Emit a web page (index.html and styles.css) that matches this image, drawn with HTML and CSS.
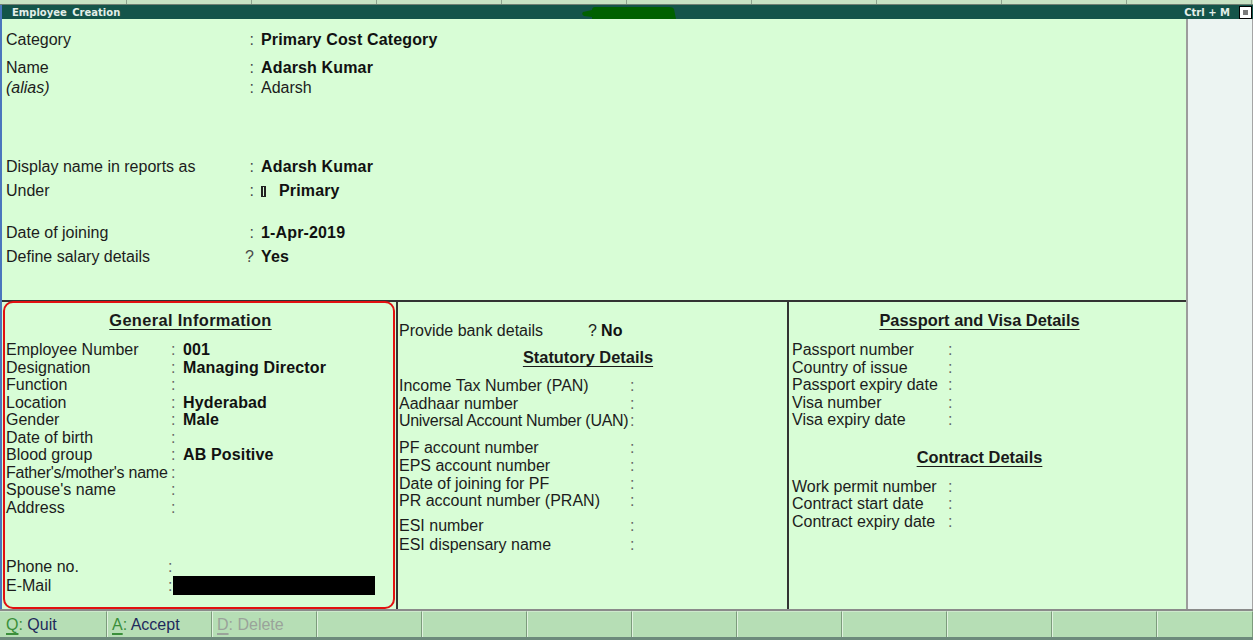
FILE: index.html
```html
<!DOCTYPE html>
<html lang="en">
<head>
<meta charset="utf-8">
<title>Employee Creation</title>
<link rel="stylesheet" href="styles.css">
</head>
<body>
<div class="tabs">
  <div class="tab"></div><div class="tab"></div><div class="tab"></div><div class="tab"></div><div class="tab"></div>
  <div class="tab"></div><div class="tab"></div><div class="tab"></div><div class="tab"></div><div class="tab"></div>
</div>
<div class="window">
  <div class="titlebar">
    <span class="title">Employee Creation</span>
    <svg class="blob" width="95" height="12" viewBox="0 0 95 12"><path d="M2 5 Q0 7 3 9 L11 10 L11 12 L95 12 L93 2 Q92 0 88 0 L14 0 Q11 0 11 3 Z" fill="#006100"/></svg>
    <span class="shortcut">Ctrl + M</span>
    <span class="winbtn"><span class="winbtn-dot"></span></span>
  </div>
  <div class="main">
    <div class="form">
      <div class="top">
        <div class="frow"><span class="lbl">Category</span><span class="mk">:</span><span class="val">Primary Cost Category</span></div>
        <div class="frow name"><span class="lbl">Name</span><span class="mk">:</span><span class="val">Adarsh Kumar</span></div>
        <div class="frow alias"><span class="lbl">(alias)</span><span class="mk">:</span><span class="val">Adarsh</span></div>
        <div class="frow display"><span class="lbl">Display name in reports as</span><span class="mk">:</span><span class="val">Adarsh Kumar</span></div>
        <div class="frow"><span class="lbl">Under</span><span class="mk">:</span><span class="val"><span class="grp-mark"></span>Primary</span></div>
        <div class="frow doj"><span class="lbl">Date of joining</span><span class="mk">:</span><span class="val">1-Apr-2019</span></div>
        <div class="frow"><span class="lbl">Define salary details</span><span class="mk">?</span><span class="val">Yes</span></div>
      </div>
      <div class="lower">
        <section class="panel general">
          <div class="heading">General Information</div>
          <div class="kvs">
            <div class="kv"><span>Employee Number</span><span class="c">:</span><span class="v">001</span></div>
            <div class="kv"><span>Designation</span><span class="c">:</span><span class="v">Managing Director</span></div>
            <div class="kv"><span>Function</span><span class="c">:</span><span class="v"></span></div>
            <div class="kv"><span>Location</span><span class="c">:</span><span class="v">Hyderabad</span></div>
            <div class="kv"><span>Gender</span><span class="c">:</span><span class="v">Male</span></div>
            <div class="kv"><span>Date of birth</span><span class="c">:</span><span class="v"></span></div>
            <div class="kv"><span>Blood group</span><span class="c">:</span><span class="v">AB Positive</span></div>
            <div class="kv"><span class="tight">Father's/mother's name</span><span class="c">:</span><span class="v"></span></div>
            <div class="kv"><span>Spouse's name</span><span class="c">:</span><span class="v"></span></div>
            <div class="kv"><span>Address</span><span class="c">:</span><span class="v"></span></div>
            <div class="kv phone"><span>Phone no.</span><span class="c left">:</span><span class="v"></span></div>
            <div class="kv email"><span>E-Mail</span><span class="c left">:</span><span class="v"><span class="redact"></span></span></div>
          </div>
        </section>
        <section class="panel statutory">
          <div class="kv bank"><span>Provide bank details</span><span class="q">?</span><span class="v">No</span></div>
          <div class="heading">Statutory Details</div>
          <div class="kvs">
            <div class="kv"><span>Income Tax Number (PAN)</span><span class="c">:</span><span class="v"></span></div>
            <div class="kv"><span>Aadhaar number</span><span class="c">:</span><span class="v"></span></div>
            <div class="kv"><span class="squeeze">Universal Account Number (UAN)</span><span class="c">:</span><span class="v"></span></div>
            <div class="kv grp"><span>PF account number</span><span class="c">:</span><span class="v"></span></div>
            <div class="kv"><span>EPS account number</span><span class="c">:</span><span class="v"></span></div>
            <div class="kv"><span>Date of joining for PF</span><span class="c">:</span><span class="v"></span></div>
            <div class="kv"><span>PR account number (PRAN)</span><span class="c">:</span><span class="v"></span></div>
            <div class="kv grp2"><span>ESI number</span><span class="c">:</span><span class="v"></span></div>
            <div class="kv esid"><span>ESI dispensary name</span><span class="c">:</span><span class="v"></span></div>
          </div>
        </section>
        <section class="panel passport">
          <div class="heading">Passport and Visa Details</div>
          <div class="kvs">
            <div class="kv"><span>Passport number</span><span class="c">:</span><span class="v"></span></div>
            <div class="kv"><span>Country of issue</span><span class="c">:</span><span class="v"></span></div>
            <div class="kv"><span>Passport expiry date</span><span class="c">:</span><span class="v"></span></div>
            <div class="kv"><span>Visa number</span><span class="c">:</span><span class="v"></span></div>
            <div class="kv"><span>Visa expiry date</span><span class="c">:</span><span class="v"></span></div>
          </div>
          <div class="heading contract">Contract Details</div>
          <div class="kvs">
            <div class="kv"><span>Work permit number</span><span class="c">:</span><span class="v"></span></div>
            <div class="kv"><span>Contract start date</span><span class="c">:</span><span class="v"></span></div>
            <div class="kv"><span>Contract expiry date</span><span class="c">:</span><span class="v"></span></div>
          </div>
        </section>
      </div>
    </div>
    <aside class="sidebar"></aside>
  </div>
</div>
<div class="keys">
  <div class="key first"><span class="hk"><u>Q</u>:</span> Quit</div>
  <div class="key"><span class="hk"><u>A</u>:</span> Accept</div>
  <div class="key off"><span class="hk"><u>D</u>:</span> Delete</div>
  <div class="key"></div><div class="key"></div><div class="key"></div><div class="key"></div>
  <div class="key"></div><div class="key"></div><div class="key"></div><div class="key"></div>
  <div class="key last"></div>
</div>
</body>
</html>
```

FILE: styles.css
```css
* { box-sizing: border-box; }
html, body { margin: 0; padding: 0; }
body {
  width: 1253px;
  height: 640px;
  overflow: hidden;
  font-family: "Liberation Sans", Arial, sans-serif;
  font-size: 16px;
  color: #1c1c1c;
  background: #d8fdd6;
}

/* top strip of tabs */
.tabs {
  display: flex;
  height: 5px;
  background: #c7e2c3;
  border-bottom: 1px solid #6f7f72;
}
.tab {
  width: 125px;
  flex: none;
  border-right: 1px solid #8ea38e;
}
.tab:first-child { width: 127px; }

/* window */
.window { border-left: 2px solid #4a76bd; }
.titlebar {
  position: relative;
  height: 14px;
  background: #14544a;
  display: flex;
  align-items: center;
  padding-left: 10px;
}
.title {
  flex: 1;
  color: #e3efe9;
  font: bold 10px "DejaVu Sans", sans-serif;
  word-spacing: 2px;
}
.blob {
  position: absolute;
  left: 579px;
  top: 2px;
}
.shortcut {
  color: #e3efe9;
  font: bold 10px "DejaVu Sans", sans-serif;
  margin-right: 9px;
}
.winbtn {
  width: 13px;
  height: 13px;
  background: #fff;
  border: 1px solid #000;
  display: flex;
  align-items: center;
  justify-content: center;
  margin-right: 1px;
}
.winbtn-dot { width: 5px; height: 5px; background: #7c7c7c; }

.main { display: flex; height: 590px; }
.form {
  width: 1184px;
  flex: none;
  display: flex;
  flex-direction: column;
  background: #d8fdd6;
}
.sidebar {
  flex: 1;
  background: #ecf4f2;
  border-left: 2px solid #9c9c9c;
  border-right: 1px solid #a5a5a5;
}

/* top section */
.top {
  height: 283px;
  flex: none;
  border-bottom: 2px solid #333;
  padding: 9px 0 0 4px;
}
.frow { display: flex; line-height: 24px; white-space: nowrap; }
.frow .lbl { width: 236px; flex: none; }
.frow .mk { width: 12px; flex: none; text-align: right; color: #4a4a4a; }
.frow .val { margin-left: 7px; font-weight: bold; color: #111; letter-spacing: 0.15px; }
.frow.name { margin-top: 4px; }
.frow.alias { line-height: 16px; }
.frow.alias .lbl { font-style: italic; }
.frow.alias .val { font-weight: normal; color: #1c1c1c; letter-spacing: 0; }
.frow.display { margin-top: 59px; }
.frow.doj { margin-top: 18px; }
.grp-mark {
  display: inline-block;
  width: 5px;
  height: 11px;
  border-left: 2px solid #222;
  border-right: 2px solid #222;
  border-top: 1px solid #222;
  border-bottom: 1px solid #222;
  margin-right: 13px;
  vertical-align: -1px;
}

/* lower panels */
.lower { flex: 1; display: flex; }
.panel { white-space: nowrap; }
.heading {
  line-height: 20px;
  font-size: 16.4px;
  font-weight: bold;
  text-decoration: underline;
  text-decoration-thickness: 1px;
  text-underline-offset: 3px;
  text-align: center;
  color: #1a1a1a;
}
.kv { display: grid; line-height: 17.5px; }
.kv .c { color: #666; }
.kv .v { font-weight: bold; color: #111; letter-spacing: 0.15px; }

.general {
  width: 392px;
  flex: none;
  margin: -1px 1px 0 1px;
  border: 2px solid #e21010;
  border-radius: 10px;
  padding: 7px 0 0 1px;
  position: relative;
}
.general .heading { padding-right: 18px; letter-spacing: 0.35px; }
.general .kvs { margin-top: 11px; }
.general .kv { grid-template-columns: 164px 13px 1fr; }
.general .c { padding-left: 1px; }
.general .c.left { padding-left: 0; margin-left: -2px; }
.tight { letter-spacing: -0.25px; }
.squeeze { letter-spacing: -0.3px; }
.general .kv.phone { margin-top: 42px; }
.general .kv.email { line-height: 19px; margin-top: 0; }
.redact {
  display: inline-block;
  width: 202px;
  height: 19px;
  background: #000;
  vertical-align: top;
  margin-left: -10px;
}

.statutory {
  width: 391px;
  flex: none;
  border-left: 2px solid #333;
  padding: 19px 0 0 1px;
}
.statutory .kv { grid-template-columns: 231px 12px 1fr; line-height: 17.7px; }
.statutory .kv.bank { grid-template-columns: 189px 13px 1fr; line-height: 20px; }
.statutory .q { color: #222; }
.statutory .heading { margin-top: 6px; padding-right: 10px; }
.statutory .kvs { margin-top: 10px; }
.statutory .kv.grp { margin-top: 9px; }
.statutory .kv.grp2 { margin-top: 7px; }
.statutory .kv.esid { margin-top: 1px; }

.passport {
  flex: 1;
  border-left: 2px solid #333;
  padding: 8px 0 0 3px;
}
.passport .heading { padding-right: 19px; }
.passport .kvs { margin-top: 11px; }
.passport .kv { grid-template-columns: 156px 12px 1fr; }
.passport .heading.contract { margin-top: 18px; }

/* bottom key bar */
.keys {
  display: flex;
  height: 31px;
  border-top: 2px solid #8a8a8a;
  border-bottom: 3px solid #6d8a7c;
  background: #b6deb5;
  overflow: hidden;
}
.key {
  width: 105px;
  flex: none;
  border-left: 1px solid #e0f2df;
  border-right: 1px solid #7c9b7c;
  border-top: 1px solid #cde9cc;
  padding-left: 4px;
  line-height: 26px;
  color: #1f2a5c;
  white-space: nowrap;
}
.key.first { width: 107px; padding-left: 6px; border-left: 0; }
.key.last { flex: 1; }
.hk { color: #3b8f3b; }
.hk u { text-decoration-thickness: 2px; text-underline-offset: 3px; }
.key.off, .key.off .hk { color: #9aa39a; }
```
